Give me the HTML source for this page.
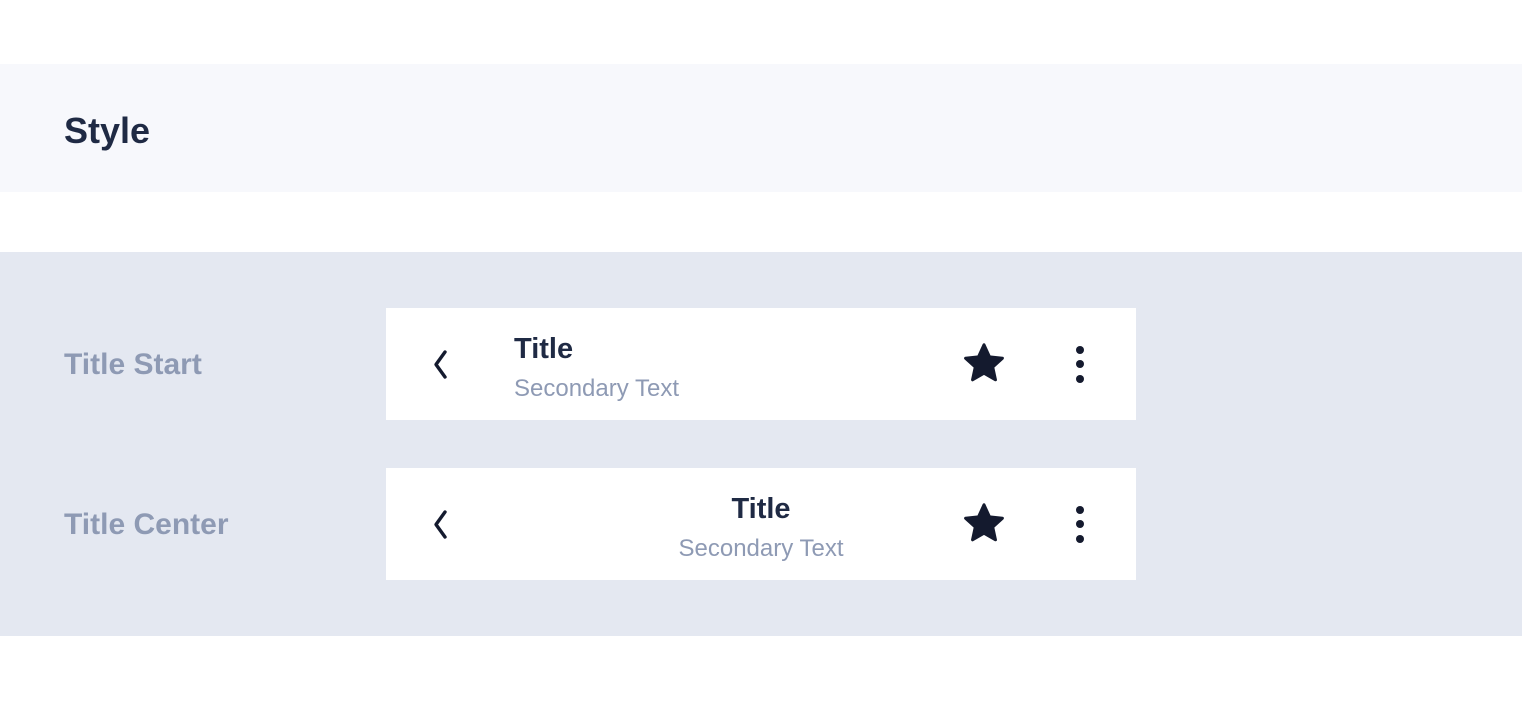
<!DOCTYPE html>
<html><head><meta charset="utf-8"><style>
body{margin:0;width:1522px;height:720px;background:#fff;font-family:"Liberation Sans","DejaVu Sans",sans-serif;position:relative;overflow:hidden}
.hdr{position:absolute;left:0;top:64px;width:1522px;height:128px;background:#f7f8fc}
.panel{position:absolute;left:0;top:252px;width:1522px;height:384px;background:#e4e8f1}
.abs{position:absolute;white-space:nowrap}
.lbl{font-size:30px;color:#8e9ab4;font-weight:600}
.bar{position:absolute;left:386px;width:750px;height:112px;background:#fff}
.t{font-size:29px;font-weight:700;color:#1f2a44}
.s{font-size:24px;color:#8e9ab4}
</style></head><body>
<div class="hdr"></div>
<div class="abs" style="left:64px;top:110px;font-size:36px;font-weight:700;color:#1f2a44">Style</div>
<div class="panel"></div>
<div class="abs lbl" style="left:64px;top:348px">Title Start</div>
<div class="abs lbl" style="left:64px;top:508px">Title Center</div>

<div class="bar" style="top:308px">
<svg class="abs" style="left:40px;top:38px" width="24" height="36" viewBox="0 0 24 36"><path d="M19 6 L10 18.5 L19 31" fill="none" stroke="#141a2e" stroke-width="3.4" stroke-linecap="round" stroke-linejoin="round"/></svg>
<div class="abs t" style="left:128px;top:25px">Title</div>
<div class="abs s" style="left:128px;top:67px">Secondary Text</div>
<svg class="abs" style="left:576px;top:34px" width="44" height="42" viewBox="0 0 24 23"><path d="M12 1.5l3 6.6 7.1.8-5.3 4.8 1.5 7-6.3-3.6-6.3 3.6 1.5-7L1.9 8.9 9 8.1z" fill="#141a2e" stroke="#141a2e" stroke-width="1.6" stroke-linejoin="round"/></svg>
<svg class="abs" style="left:686px;top:36px" width="16" height="42"><circle cx="8" cy="6" r="4" fill="#141a2e"/><circle cx="8" cy="20" r="4" fill="#141a2e"/><circle cx="8" cy="35" r="4" fill="#141a2e"/></svg>
</div>

<div class="bar" style="top:468px">
<svg class="abs" style="left:40px;top:38px" width="24" height="36" viewBox="0 0 24 36"><path d="M19 6 L10 18.5 L19 31" fill="none" stroke="#141a2e" stroke-width="3.4" stroke-linecap="round" stroke-linejoin="round"/></svg>
<div class="abs t" style="left:0;width:750px;text-align:center;top:25px">Title</div>
<div class="abs s" style="left:0;width:750px;text-align:center;top:67px">Secondary Text</div>
<svg class="abs" style="left:576px;top:34px" width="44" height="42" viewBox="0 0 24 23"><path d="M12 1.5l3 6.6 7.1.8-5.3 4.8 1.5 7-6.3-3.6-6.3 3.6 1.5-7L1.9 8.9 9 8.1z" fill="#141a2e" stroke="#141a2e" stroke-width="1.6" stroke-linejoin="round"/></svg>
<svg class="abs" style="left:686px;top:36px" width="16" height="42"><circle cx="8" cy="6" r="4" fill="#141a2e"/><circle cx="8" cy="20" r="4" fill="#141a2e"/><circle cx="8" cy="35" r="4" fill="#141a2e"/></svg>
</div>
</body></html>
